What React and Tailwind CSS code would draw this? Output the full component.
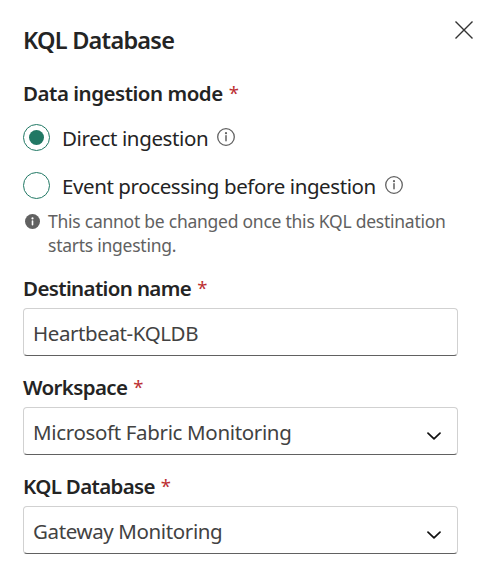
function InfoOutline() {
  return (
    <svg className="size-[18px] shrink-0 mt-[4px]" viewBox="0 0 18 18" fill="none">
      <circle cx="9" cy="9" r="8.3" stroke="#616161" strokeWidth="1.3" />
      <circle cx="9" cy="5.2" r="1.1" fill="#616161" />
      <path d="M9 7.8V12.8" stroke="#616161" strokeWidth="1.5" strokeLinecap="round" />
    </svg>
  );
}

function InfoFilled() {
  return (
    <svg className="ml-[2px] mt-[5px] size-[15px] shrink-0" viewBox="0 0 15 15">
      <circle cx="7.5" cy="7.5" r="7.5" fill="#616161" />
      <circle cx="7.5" cy="4.4" r="1.1" fill="#fff" />
      <path d="M7.5 7V10.8" stroke="#fff" strokeWidth="1.6" strokeLinecap="round" />
    </svg>
  );
}

function Chevron() {
  return (
    <svg className="mr-[16px] mt-[10px] h-[8px] w-[14px] shrink-0" viewBox="0 0 14 8" fill="none">
      <path d="M1 1.2L7 6.8L13 1.2" stroke="#111" strokeWidth="1.7" strokeLinecap="round" strokeLinejoin="round" />
    </svg>
  );
}

function Label({ children, tracking }) {
  return (
    <div className="flex h-7 gap-[6px] text-[20.5px] leading-7 whitespace-nowrap text-[#242424]">
      <span className={`font-semibold ${tracking}`}>{children}</span>
      <span className="text-[18.5px] text-[#bc2f32]">*</span>
    </div>
  );
}

function Radio({ checked, children, tracking }) {
  return (
    <div className="flex h-7 whitespace-nowrap">
      <span className="flex size-[27px] shrink-0 items-center justify-center rounded-full border border-[#217864]">
        {checked && <span className="size-[15px] rounded-full bg-[#217864]" />}
      </span>
      <span className={`ml-3 mr-[9px] text-[20.5px] leading-7 text-[#242424] ${tracking}`}>{children}</span>
      <InfoOutline />
    </div>
  );
}

function Field({ label, labelTracking, value, valueTracking, select }) {
  return (
    <div className="mt-[17px]">
      <Label tracking={labelTracking}>{label}</Label>
      <div className="mt-[6px] flex h-12 w-[435px] items-center justify-between rounded-[4px] border border-[#d1d1d1] border-b-[#616161]">
        <span className={`ml-[9px] pt-[2px] text-[20.5px] leading-7 whitespace-nowrap text-[#424242] ${valueTracking}`}>{value}</span>
        {select && <Chevron />}
      </div>
    </div>
  );
}

export default function App() {
  return (
    <main className="h-[583px] w-[493px] overflow-hidden bg-white pl-[23px] font-['Noto_Sans',sans-serif]">
      <header className="flex justify-between pr-[20px]">
        <h1 className="mt-6 text-[23.5px] leading-8 font-semibold tracking-[-0.75px] whitespace-nowrap text-[#242424]">KQL Database</h1>
        <svg className="mt-[21px] size-[18px]" viewBox="0 0 18 18" fill="none">
          <path d="M0.5 0.5L17.5 17.5M17.5 0.5L0.5 17.5" stroke="#333" strokeWidth="1.4" />
        </svg>
      </header>
      <div className="mt-[23px]">
        <Label tracking="tracking-[-0.48px]">Data ingestion mode</Label>
      </div>
      <div className="mt-[17px] flex flex-col gap-5">
        <Radio checked tracking="tracking-[-0.36px]">Direct ingestion</Radio>
        <Radio tracking="tracking-[-0.4px]">Event processing before ingestion</Radio>
      </div>
      <div className="mt-[9px] flex gap-[8px] text-[17.5px] leading-6 tracking-[-0.25px] whitespace-nowrap text-[#616161]">
        <InfoFilled />
        <p>
          This cannot be changed once this KQL destination
          <br />
          starts ingesting.
        </p>
      </div>
      <Field label="Destination name" labelTracking="tracking-[-0.63px]" value="Heartbeat-KQLDB" valueTracking="tracking-[-0.4px]" />
      <Field label="Workspace" labelTracking="tracking-[-0.63px]" value="Microsoft Fabric Monitoring" valueTracking="tracking-[-0.34px]" select />
      <Field label="KQL Database" labelTracking="tracking-[-0.66px]" value="Gateway Monitoring" valueTracking="tracking-[-0.38px]" select />
    </main>
  );
}
